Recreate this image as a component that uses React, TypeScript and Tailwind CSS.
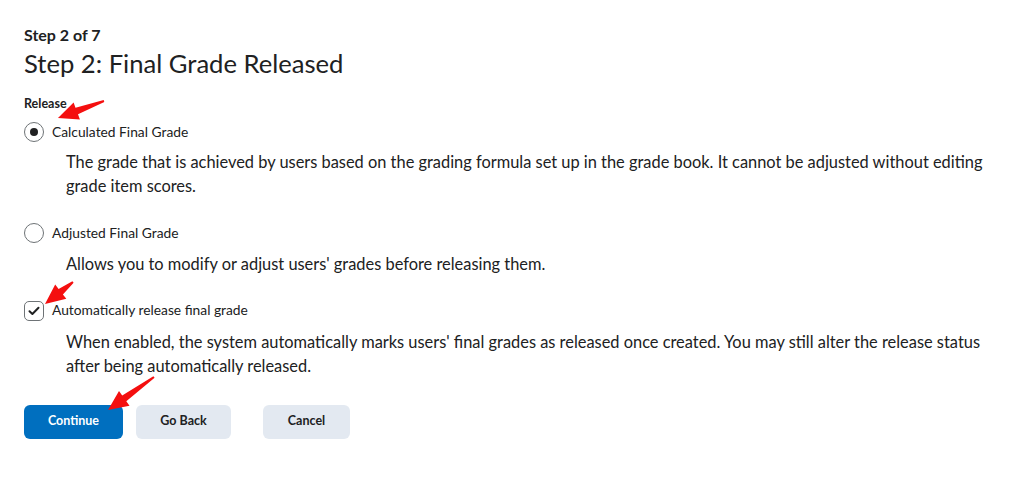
import React from "react";

function Arrow({ x1, y1, x2, y2 }: { x1: number; y1: number; x2: number; y2: number }) {
  const dx = x2 - x1;
  const dy = y2 - y1;
  const len = Math.sqrt(dx * dx + dy * dy);
  const ux = dx / len;
  const uy = dy / len;
  const px = -uy;
  const py = ux;
  const headLen = 20;
  const headW = 9;
  const shaftTail = 1;
  const shaftHead = 3.5;
  const bx = x2 - ux * headLen;
  const by = y2 - uy * headLen;
  const pts = [
    [x1 + px * shaftTail, y1 + py * shaftTail],
    [bx + px * shaftHead, by + py * shaftHead],
    [bx + px * headW, by + py * headW],
    [x2, y2],
    [bx - px * headW, by - py * headW],
    [bx - px * shaftHead, by - py * shaftHead],
    [x1 - px * shaftTail, y1 - py * shaftTail],
  ]
    .map((p) => p.map((v) => v.toFixed(1)).join(","))
    .join(" ");
  return <polygon points={pts} fill="#f40f0f" />;
}

export default function App() {
  return (
    <div
      className="relative w-[1024px] h-[478px] bg-white text-[#202122] overflow-hidden"
      style={{ fontFamily: "Lato, 'Noto Sans', sans-serif" }}
    >
      <div className="pl-6 pt-[26px]">
        <div className="text-[16px] font-bold leading-[18px]">Step 2 of 7</div>
        <h2 className="text-[25.6px] leading-[32px] mt-[3px]">Step 2: Final Grade Released</h2>

        <div className="mt-[17px] text-[12.5px] font-bold leading-[16px]">Release</div>

        <label className="flex items-center gap-2 mt-[10px] h-[20px]">
          <span className="w-5 h-5 rounded-full border border-[#6e7376] flex items-center justify-center">
            <span className="w-2 h-2 rounded-full bg-[#202122]" />
          </span>
          <span className="text-[13.8px] text-[#202122]">Calculated Final Grade</span>
        </label>
        <p className="ml-[42px] mt-[8px] text-[16.4px] leading-[23.5px] text-[#202122] w-[935px]">
          The grade that is achieved by users based on the grading formula set up in the grade book. It cannot be
          adjusted without editing grade item scores.
        </p>

        <label className="flex items-center gap-2 mt-[26px] h-[20px]">
          <span className="w-5 h-5 rounded-full border border-[#6e7376]" />
          <span className="text-[13.8px]">Adjusted Final Grade</span>
        </label>
        <p className="ml-[42px] mt-[9px] text-[16.4px] leading-[23.5px]">
          Allows you to modify or adjust users' grades before releasing them.
        </p>

        <label className="flex items-center gap-2 mt-[25px] h-[20px]">
          <span className="w-5 h-5 rounded-[5px] border border-[#6e7376] flex items-center justify-center">
            <svg width="12" height="10" viewBox="0 0 12 10">
              <path d="M1.5 5.2 L4.4 8 L10.5 1.8" stroke="#202122" strokeWidth="2" fill="none" strokeLinecap="round" strokeLinejoin="round" />
            </svg>
          </span>
          <span className="text-[13.8px]">Automatically release final grade</span>
        </label>
        <p className="ml-[42px] mt-[9px] text-[16.4px] leading-[24px] w-[935px]">
          When enabled, the system automatically marks users' final grades as released once created. You may still
          alter the release status after being automatically released.
        </p>

        <div className="flex mt-[27px] h-[34px]">
          <button className="w-[99px] h-[34px] rounded-[6px] bg-[#006fbf] text-white text-[12.5px] font-bold">
            Continue
          </button>
          <button className="ml-[13px] w-[95px] h-[34px] rounded-[6px] bg-[#e3e9f1] text-[#202122] text-[12.5px] font-bold">
            Go Back
          </button>
          <button className="ml-[32px] w-[87px] h-[34px] rounded-[6px] bg-[#e3e9f1] text-[#202122] text-[12.5px] font-bold">
            Cancel
          </button>
        </div>
      </div>

      <svg className="absolute inset-0 pointer-events-none" width="1024" height="478">
        <Arrow x1={104} y1={101} x2={58} y2={118} />
        <Arrow x1={73} y1={282} x2={45} y2={304} />
        <Arrow x1={154} y1={377} x2={108} y2={410} />
      </svg>
    </div>
  );
}
